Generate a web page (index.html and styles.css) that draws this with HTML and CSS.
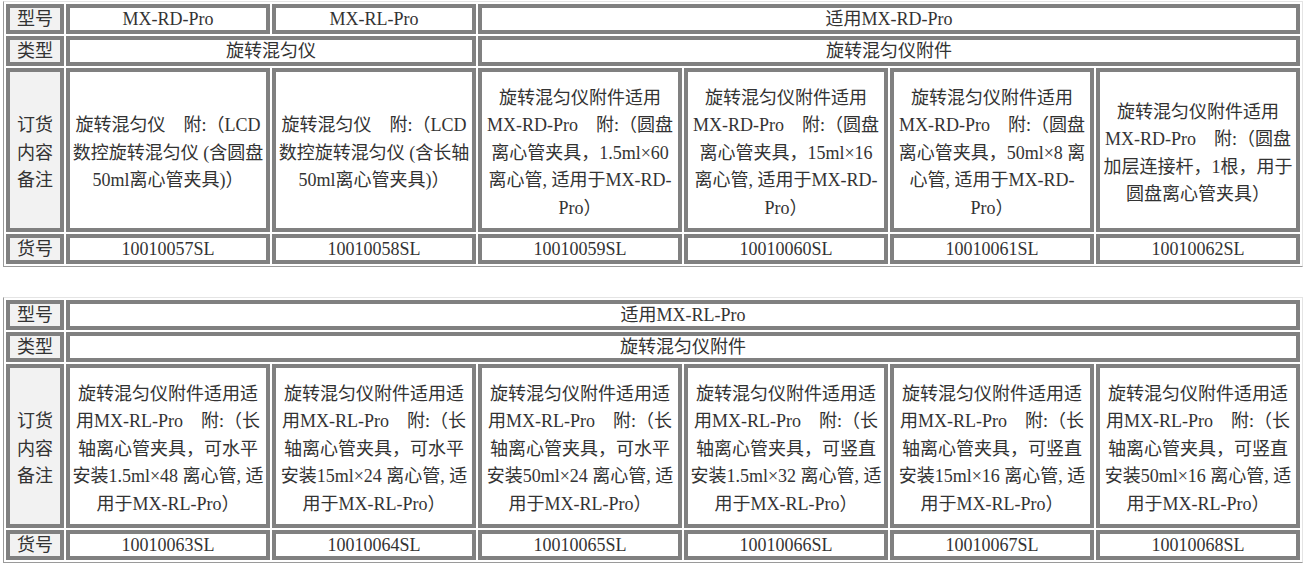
FILE: index.html
```html
<!DOCTYPE html>
<html lang="zh-CN">
<head>
<meta charset="utf-8">
<title>旋转混匀仪</title>
<link rel="stylesheet" href="styles.css">
</head>
<body>
<table class="spec first">
  <colgroup><col class="lab"><col class="c"><col class="c"><col class="c"><col class="c"><col class="c"><col class="c"></colgroup>
  <tr class="short">
    <td class="label">型号</td>
    <td>MX-RD-Pro</td>
    <td>MX-RL-Pro</td>
    <td colspan="4">适用MX-RD-Pro</td>
  </tr>
  <tr class="short">
    <td class="label">类型</td>
    <td colspan="2">旋转混匀仪</td>
    <td colspan="4">旋转混匀仪附件</td>
  </tr>
  <tr class="tall">
    <td class="label">订货内容备注</td>
    <td>旋转混匀仪&nbsp;&nbsp;&nbsp;&nbsp;附:（LCD数控旋转混匀仪 (含圆盘50ml离心管夹具)）</td>
    <td>旋转混匀仪&nbsp;&nbsp;&nbsp;&nbsp;附:（LCD数控旋转混匀仪 (含长轴50ml离心管夹具)）</td>
    <td>旋转混匀仪附件适用MX-RD-Pro&nbsp;&nbsp;&nbsp;&nbsp;附:（圆盘离心管夹具，1.5ml×60 离心管, 适用于MX-RD-Pro）</td>
    <td>旋转混匀仪附件适用MX-RD-Pro&nbsp;&nbsp;&nbsp;&nbsp;附:（圆盘离心管夹具，15ml×16 离心管, 适用于MX-RD-Pro）</td>
    <td>旋转混匀仪附件适用MX-RD-Pro&nbsp;&nbsp;&nbsp;&nbsp;附:（圆盘离心管夹具，50ml×8 离心管, 适用于MX-RD-Pro）</td>
    <td>旋转混匀仪附件适用MX-RD-Pro&nbsp;&nbsp;&nbsp;&nbsp;附:（圆盘加层连接杆，1根，用于圆盘离心管夹具）</td>
  </tr>
  <tr class="short">
    <td class="label">货号</td>
    <td>10010057SL</td>
    <td>10010058SL</td>
    <td>10010059SL</td>
    <td>10010060SL</td>
    <td>10010061SL</td>
    <td>10010062SL</td>
  </tr>
</table>

<table class="spec second">
  <colgroup><col class="lab"><col class="c"><col class="c"><col class="c"><col class="c"><col class="c"><col class="c"></colgroup>
  <tr class="short">
    <td class="label">型号</td>
    <td colspan="6">适用MX-RL-Pro</td>
  </tr>
  <tr class="short">
    <td class="label">类型</td>
    <td colspan="6">旋转混匀仪附件</td>
  </tr>
  <tr class="tall">
    <td class="label">订货内容备注</td>
    <td>旋转混匀仪附件适用适用MX-RL-Pro&nbsp;&nbsp;&nbsp;&nbsp;附:（长轴离心管夹具，可水平安装1.5ml×48 离心管, 适用于MX-RL-Pro）</td>
    <td>旋转混匀仪附件适用适用MX-RL-Pro&nbsp;&nbsp;&nbsp;&nbsp;附:（长轴离心管夹具，可水平安装15ml×24 离心管, 适用于MX-RL-Pro）</td>
    <td>旋转混匀仪附件适用适用MX-RL-Pro&nbsp;&nbsp;&nbsp;&nbsp;附:（长轴离心管夹具，可水平安装50ml×24 离心管, 适用于MX-RL-Pro）</td>
    <td>旋转混匀仪附件适用适用MX-RL-Pro&nbsp;&nbsp;&nbsp;&nbsp;附:（长轴离心管夹具，可竖直安装1.5ml×32 离心管, 适用于MX-RL-Pro）</td>
    <td>旋转混匀仪附件适用适用MX-RL-Pro&nbsp;&nbsp;&nbsp;&nbsp;附:（长轴离心管夹具，可竖直安装15ml×16 离心管, 适用于MX-RL-Pro）</td>
    <td>旋转混匀仪附件适用适用MX-RL-Pro&nbsp;&nbsp;&nbsp;&nbsp;附:（长轴离心管夹具，可竖直安装50ml×16 离心管, 适用于MX-RL-Pro）</td>
  </tr>
  <tr class="short">
    <td class="label">货号</td>
    <td>10010063SL</td>
    <td>10010064SL</td>
    <td>10010065SL</td>
    <td>10010066SL</td>
    <td>10010067SL</td>
    <td>10010068SL</td>
  </tr>
</table>
</body>
</html>
```

FILE: styles.css
```css
html, body {
  margin: 0;
  padding: 0;
  background: #ffffff;
}

body {
  font-family: "Liberation Serif", "Noto Sans CJK SC", serif;
  font-size: 18px;
  color: #333333;
}

.spec {
  table-layout: fixed;
  width: 1298px;
  border-collapse: separate;
  border-spacing: 2px;
  border-style: solid;
  border-width: 1px;
  border-color: #e4e4e4 #e4e4e4 #9a9a9a #9a9a9a;
  margin-left: 3px;
  background: #ffffff;
}

.first {
  margin-top: 1px;
}

.second {
  margin-top: 30px;
}

.spec col.lab {
  width: 58px;
}

.spec col.c {
  width: 204px;
}

.spec td {
  box-sizing: border-box;
  border: 4px solid #808080;
  padding: 0 1px;
  text-align: center;
  vertical-align: middle;
  background: #ffffff;
  font-weight: normal;
}

.spec td.label {
  background: #f2f2f2;
}

.spec tr.short td {
  height: 30px;
  line-height: 21px;
  padding-top: 1px;
}

.spec tr.tall td {
  height: 164px;
  line-height: 27.5px;
  padding-top: 7px;
}
```
